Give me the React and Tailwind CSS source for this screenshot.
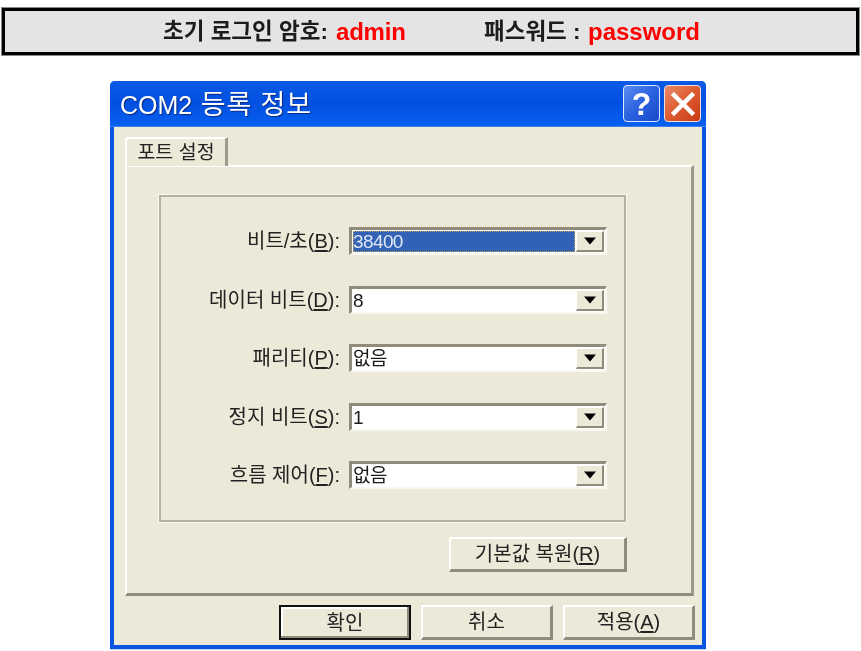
const FONT = "font-['Liberation_Sans','Noto_Sans_CJK_KR',sans-serif]"

const FIELDS = [
  { label: '비트/초(', key: 'B', value: '38400', selected: true },
  { label: '데이터 비트(', key: 'D', value: '8' },
  { label: '패리티(', key: 'P', value: '없음' },
  { label: '정지 비트(', key: 'S', value: '1' },
  { label: '흐름 제어(', key: 'F', value: '없음' },
]

function Combo({ value, selected }) {
  return (
    <div className="w-[258px] h-[28px] flex border-t-[3px] border-l-[3px] border-[#8f8c7c] border-r-2 border-b-2 border-r-[#f8f7f1] border-b-[#f8f7f1] bg-white">
      <div className="flex-1 p-[1px] flex">
        <div className={`flex-1 flex items-center pl-0 text-[19px] leading-none tracking-[-0.6px] ${selected ? 'bg-[#3162b5] text-[#dfe6f5] outline-1 outline-dotted outline-[#b8a55a] -outline-offset-1' : 'text-[#1a1a1a]'}`}>
          {value}
        </div>
      </div>
      <div className="w-[28px] flex items-center justify-center bg-[#ece9d8] border-t border-l border-white border-r-2 border-b-2 border-r-[#8f8c7c] border-b-[#8f8c7c] my-[1px] mr-[1px]">
        <svg width="14" height="8" viewBox="0 0 14 8"><path d="M1 0.5h12L7 7.5z" fill="#000" /></svg>
      </div>
    </div>
  )
}

function Button({ className = '', children }) {
  return (
    <button className={`h-[35px] text-[20px] leading-none text-[#222] bg-[#ece9d8] border-t-2 border-l-2 border-white border-r-[3px] border-b-[3px] border-r-[#8f8c7c] border-b-[#8f8c7c] ${className}`}>
      {children}
    </button>
  )
}

export default function App() {
  return (
    <div className={`w-[861px] h-[651px] bg-white overflow-hidden pt-[7px] pl-[1px] blur-[0.4px] ${FONT}`}>
      {/* Banner */}
      <div className="w-[859px] h-[49px] bg-[#e4e4e4] border-[4px] border-black outline-1 outline-[#8a8a8a] -outline-offset-1 flex items-center pl-[158px] font-bold">
        <span className="text-[22.5px] text-[#1c1c1c] w-[173px] whitespace-nowrap">초기 로그인 암호:</span>
        <span className="text-[24px] text-[#ff0000] w-[148px] tracking-[-0.2px] font-['Liberation_Sans',sans-serif]">admin</span>
        <span className="text-[22.5px] text-[#1c1c1c] w-[104px] whitespace-nowrap">패스워드 :</span>
        <span className="text-[24px] text-[#ff0000] font-['Liberation_Sans',sans-serif]">password</span>
      </div>

      {/* Dialog */}
      <div className="w-[596px] h-[569px] ml-[109px] mt-[25px] flex flex-col rounded-t-[5px] overflow-hidden bg-[#0a55e0] border-b border-[#c5d0ee]">
        <div className="h-[46px] shrink-0 flex items-center pl-[10px] pr-[5px] bg-gradient-to-b from-[#0a5ae6] via-[#0350e0] to-[#0660f0] border-b border-[#3f7df0]">
          <span className="flex-1 pt-[4px] text-white [text-shadow:1px_1px_1px_#0a2a80]">
            <span className="text-[25px]">COM2</span>
            <span className="text-[27px] tracking-[0.9px]"> 등록 정보</span>
          </span>
          <div className="w-[37px] h-[37px] mr-[4px] rounded-[4px] border border-[#dfe8fa] bg-gradient-to-br from-[#5a8cf0] via-[#2a62e0] to-[#1a48c8] flex items-center justify-center text-white text-[32px] font-bold leading-none font-['Liberation_Sans',sans-serif]">?</div>
          <div className="w-[37px] h-[37px] rounded-[4px] border border-[#f0dfd8] bg-gradient-to-br from-[#ea8a68] via-[#dd5a30] to-[#c83a10] flex items-center justify-center">
            <svg width="26" height="26" viewBox="0 0 26 26"><path d="M4 4l18 18M22 4L4 22" stroke="#fff" strokeWidth="4.5" strokeLinecap="square" /></svg>
          </div>
        </div>

        <div className="flex-1 mx-[4px] mb-[4px] bg-[#ece9d8] pl-[11px] pr-[9px] pt-[10px] flex flex-col">
          {/* Tab */}
          <div className="w-[103px] h-[29px] -mb-[1px] relative z-10 bg-[#ece9d8] border-t-2 border-l-2 border-white border-r-[3px] border-r-[#9d9a8a] rounded-tl-[3px] flex items-center justify-center text-[19.5px] text-[#222] whitespace-nowrap">
            포트 설정
          </div>
          {/* Tab panel */}
          <div className="w-[569px] h-[431px] shrink-0 border-t-2 border-l-2 border-white border-r-[3px] border-b-[3px] border-r-[#9d9a8a] border-b-[#8f8c7c] pl-[32px] pt-[28px]">
            <div className="w-[467px] h-[327px] border-2 border-[#b5b2a2] outline-1 outline-[#f8f7f1] pt-[30px] flex flex-col gap-[30.5px]">
              {FIELDS.map(f => (
                <div key={f.key} className="h-[28px] flex items-center justify-end pr-[17px] gap-[9px]">
                  <span className="text-[20px] leading-none text-[#222] whitespace-nowrap">
                    {f.label}<span className="underline underline-offset-2">{f.key}</span>):
                  </span>
                  <Combo value={f.value} selected={f.selected} />
                </div>
              ))}
            </div>
            <div className="flex justify-end w-[468px] mt-[15px]">
              <Button className="w-[178px]">기본값 복원(<span className="underline underline-offset-2">R</span>)</Button>
            </div>
          </div>
          {/* Bottom buttons */}
          <div className="flex justify-end gap-[10px] mt-[9px] mr-[-2px]">
            <Button className="w-[132px] !border-2 !border-[#111] shadow-[inset_-2px_-2px_0_#8f8c7c,inset_2px_2px_0_#fff]">확인</Button>
            <Button className="w-[132px]">취소</Button>
            <Button className="w-[132px]">적용(<span className="underline underline-offset-2">A</span>)</Button>
          </div>
        </div>
      </div>
    </div>
  )
}
